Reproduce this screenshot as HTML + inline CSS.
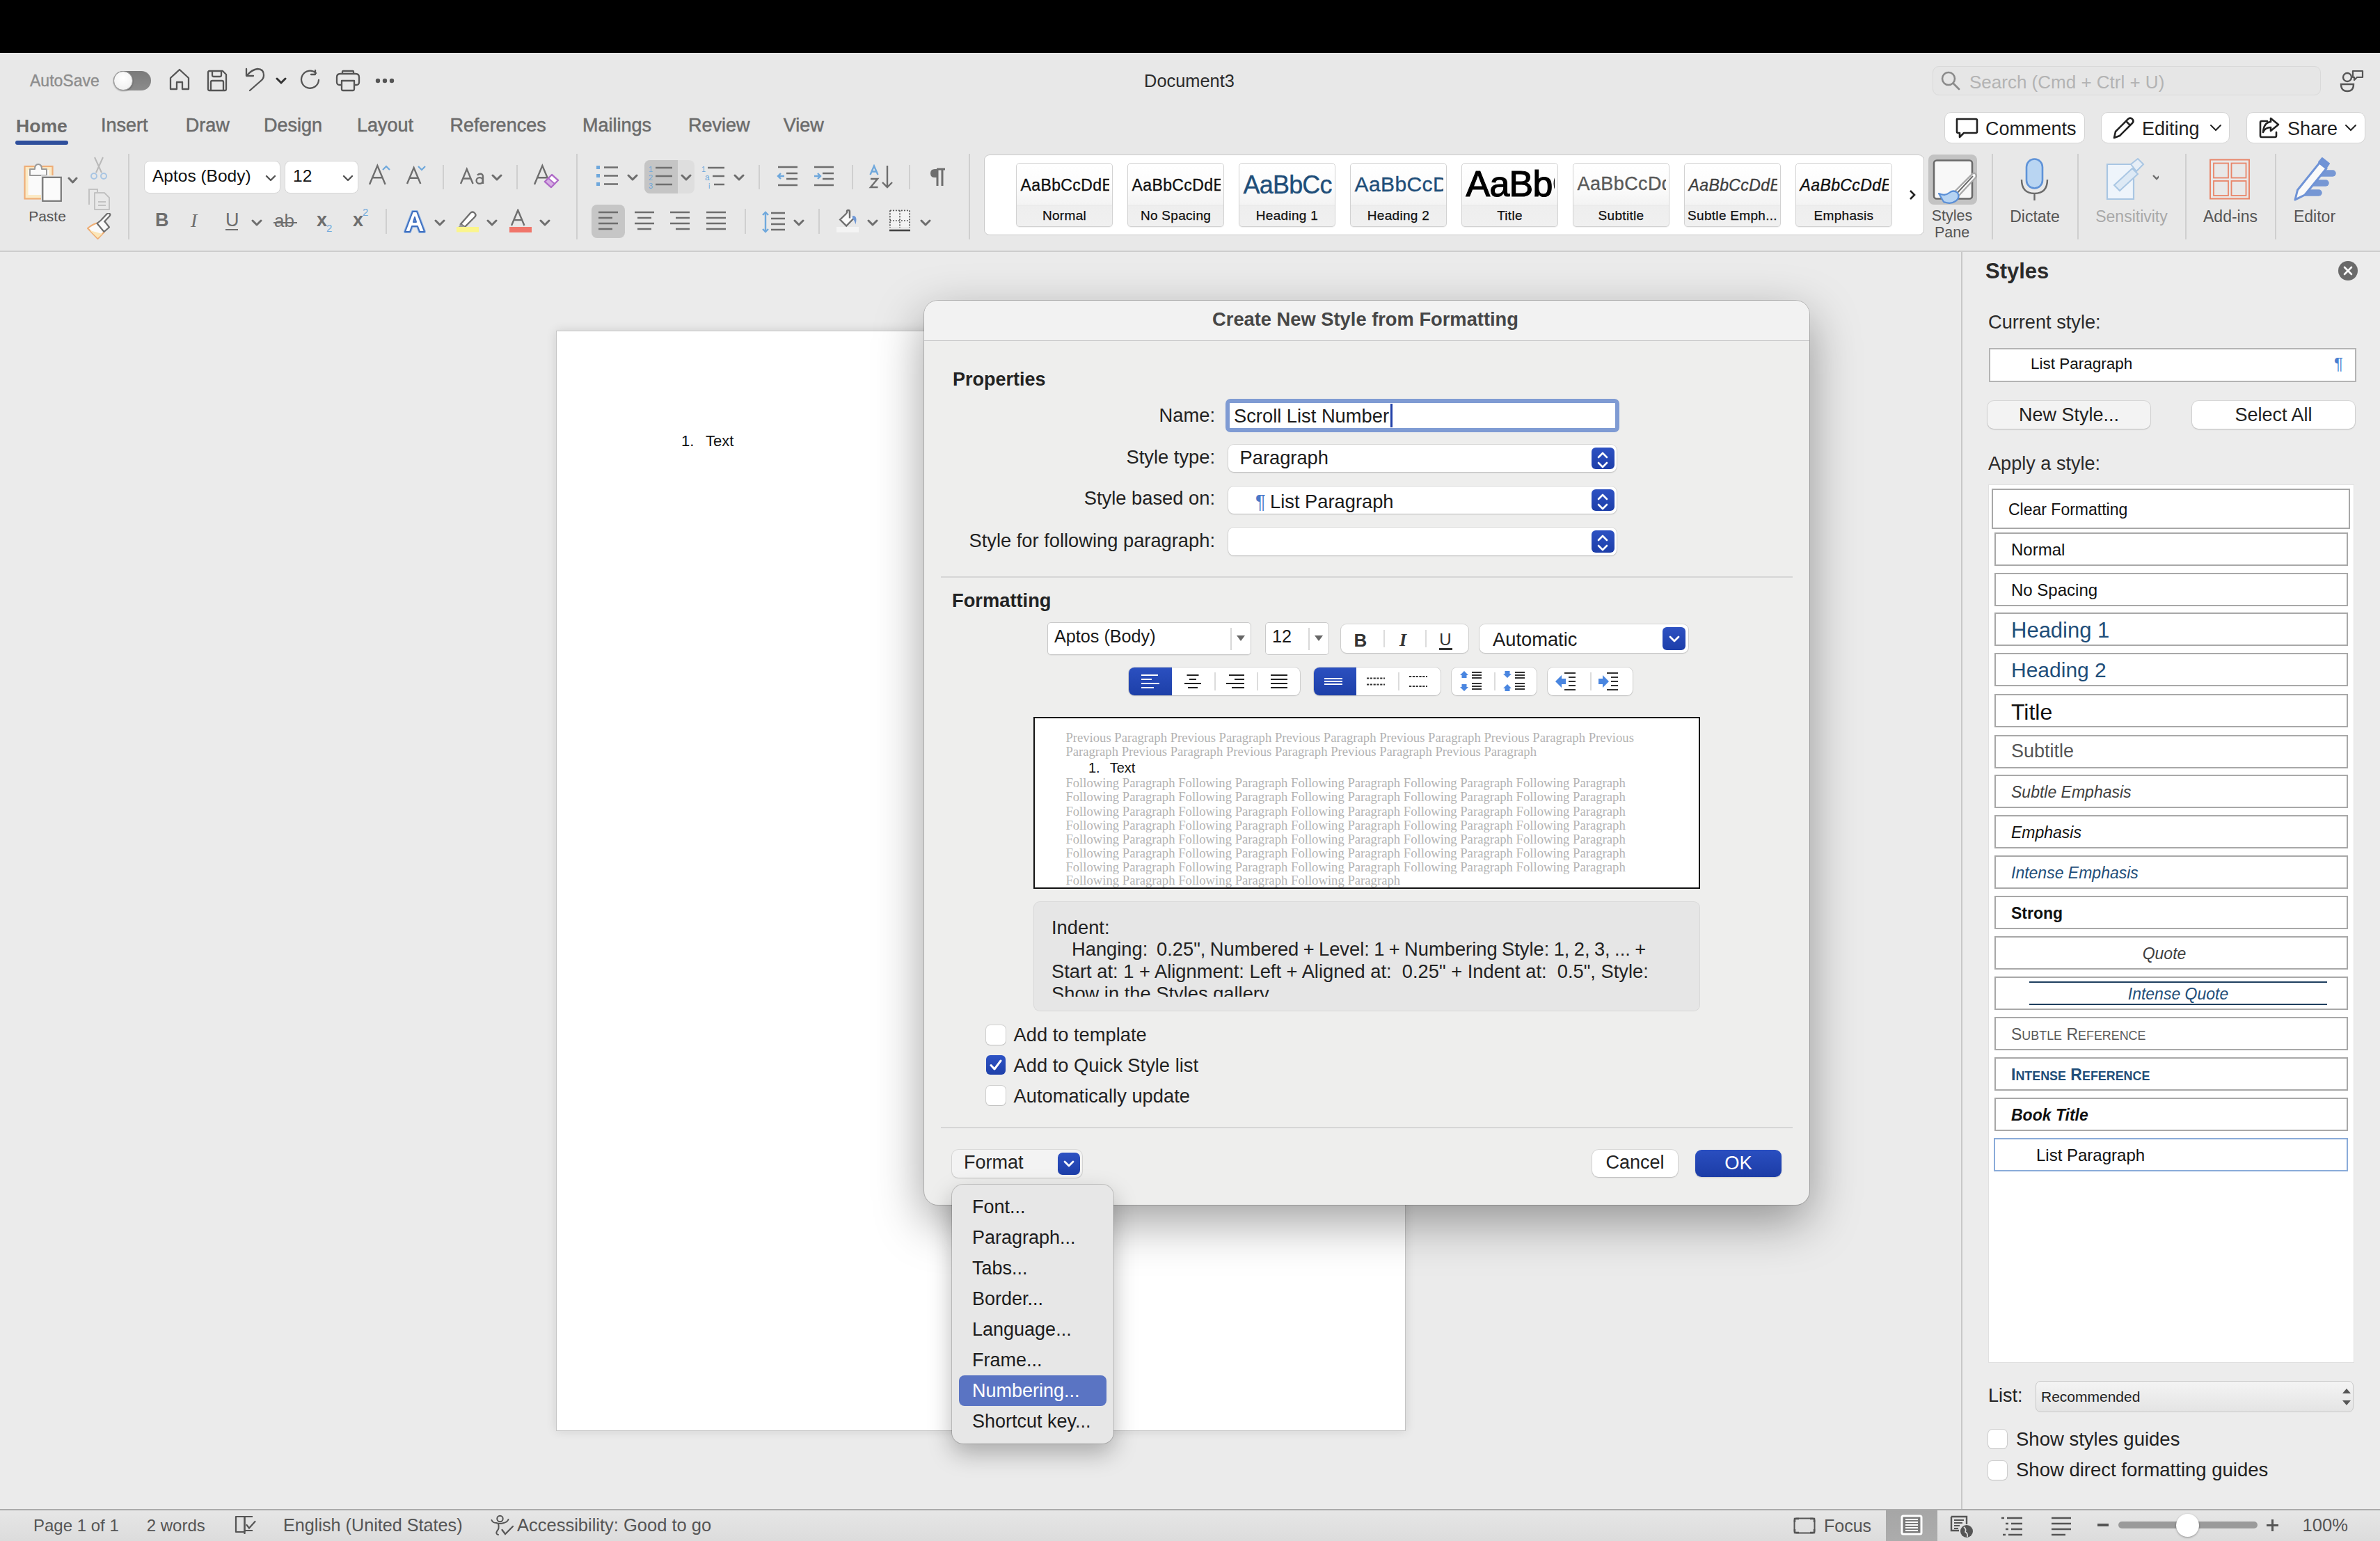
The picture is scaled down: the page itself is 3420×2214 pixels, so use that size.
<!DOCTYPE html><html><head><meta charset="utf-8"><style>
html,body{margin:0;padding:0;}
body{width:3420px;height:2214px;overflow:hidden;position:relative;background:#ebebeb;font-family:"Liberation Sans",sans-serif;}
.a{position:absolute;box-sizing:border-box;}
.t{position:absolute;white-space:pre;line-height:1;}
</style></head><body>
<div class="a" style="left:0px;top:0px;width:3420px;height:76px;background:#000;"></div>
<div class="a" style="left:0px;top:76px;width:3420px;height:284px;background:#e8e8e8;"></div>
<div class="a" style="left:0px;top:360px;width:3420px;height:2px;background:#cdcdcd;"></div>
<div class="a" style="left:0px;top:362px;width:2818px;height:1806px;background:#ebebeb;"></div>
<div class="a" style="left:2818px;top:362px;width:602px;height:1806px;background:#ececec;border-left:2px solid #c8c8c8;"></div>
<div class="a" style="left:0px;top:2168px;width:3420px;height:46px;background:linear-gradient(#e6e6e6,#dcdcdc);border-top:2px solid #ababab;"></div>
<div class="t" style="left:43.0px;top:104.5px;font-size:23px;color:#8d8d8d;font-weight:normal;font-style:normal;font-family:'Liberation Sans', sans-serif;-webkit-text-stroke:0.4px #8d8d8d;">AutoSave</div>
<div class="a" style="left:163px;top:102px;width:54px;height:28px;border-radius:14px;background:linear-gradient(#7a7a7a,#8c8c8c);"></div>
<div class="a" style="left:163px;top:102px;width:28px;height:28px;border-radius:50%;background:radial-gradient(circle at 50% 35%,#fff,#ececec);box-shadow:0 1px 2px rgba(0,0,0,.35);border:1px solid #9a9a9a;"></div>
<svg class="a" style="left:242px;top:98px;" width="32" height="34" viewBox="0 0 32 34"><path d="M3 14 L16 2 L29 14 V30 H20 V20 H12 V30 H3 Z" stroke="#555" stroke-width="2.3" fill="none" stroke-linejoin="round" stroke-linecap="round"/></svg>
<svg class="a" style="left:296px;top:100px;" width="32" height="32" viewBox="0 0 32 32"><path d="M3 4 Q3 2 5 2 H24 L29 7 V28 Q29 30 27 30 H5 Q3 30 3 28 Z M9 2 V8 Q9 10 11 10 H20 Q22 10 22 8 V2 M7 30 V18 Q7 16 9 16 H23 Q25 16 25 18 V30" stroke="#555" stroke-width="2.3" fill="none" stroke-linejoin="round" stroke-linecap="round"/></svg>
<svg class="a" style="left:352px;top:97px;" width="30" height="36" viewBox="0 0 30 36"><path d="M2 2 V12 H12 M3 11 Q10 3 18 2 Q27 2 27 11 Q27 16 23 19 L7 33" stroke="#555" stroke-width="2.3" fill="none" stroke-linejoin="round" stroke-linecap="round"/></svg>
<svg class="a" style="left:396px;top:110px;" width="16" height="12" viewBox="0 0 16 12"><path d="M2 3 L8 9 L14 3" stroke="#333" stroke-width="3" fill="none" stroke-linecap="round"/></svg>
<svg class="a" style="left:431px;top:100px;" width="32" height="32" viewBox="0 0 32 32"><path d="M27 15 A12.5 12.5 0 1 1 23 5 M22 1 V7 H16" stroke="#555" stroke-width="2.3" fill="none" stroke-linejoin="round" stroke-linecap="round"/></svg>
<svg class="a" style="left:482px;top:100px;" width="36" height="32" viewBox="0 0 36 32"><path d="M10 6 V3 Q10 2 11 2 H25 Q26 2 26 3 V6 M8 22 H6 Q2 22 2 18 V11 Q2 6 7 6 H29 Q34 6 34 11 V18 Q34 22 30 22 H28 M9 16 H27 V28 Q27 30 25 30 H11 Q9 30 9 28 Z" stroke="#555" stroke-width="2.3" fill="none" stroke-linejoin="round" stroke-linecap="round"/></svg>
<svg class="a" style="left:539px;top:111px;" width="30" height="10" viewBox="0 0 30 10"><circle cx="4" cy="5" r="3.2" fill="#555"/><circle cx="14" cy="5" r="3.2" fill="#555"/><circle cx="24" cy="5" r="3.2" fill="#555"/></svg>
<div class="t" style="left:1709.0px;transform:translateX(-50%);top:103.5px;font-size:25.4px;color:#2c2c2c;font-weight:normal;font-style:normal;font-family:'Liberation Sans', sans-serif;">Document3</div>
<div class="a" style="left:2777px;top:95px;width:558px;height:42px;background:#e6e6e6;border:1.5px solid #d9d9d9;border-radius:9px;"></div>
<svg class="a" style="left:2788px;top:101px;" width="30" height="30" viewBox="0 0 30 30"><circle cx="12" cy="12" r="9" stroke="#8a8a8a" stroke-width="2.6" fill="none"/><path d="M19 19 L27 27" stroke="#8a8a8a" stroke-width="2.8" stroke-linecap="round"/></svg>
<div class="t" style="left:2830.0px;top:105.0px;font-size:26px;color:#b3b3b3;font-weight:normal;font-style:normal;font-family:'Liberation Sans', sans-serif;">Search (Cmd + Ctrl + U)</div>
<svg class="a" style="left:3362px;top:99px;" width="36" height="34" viewBox="0 0 36 34"><circle cx="11" cy="12" r="6" stroke="#555" stroke-width="2.4" fill="none"/><path d="M2 22 H20 Q20 32 11 32 Q2 32 2 22 Z" stroke="#555" stroke-width="2.4" fill="none"/><path d="M19 3 H33 V12 H25 L21 16 V12 H19 Z" stroke="#555" stroke-width="2.2" fill="#e8e8e8" stroke-linejoin="round"/></svg>
<div class="t" style="left:23.0px;top:167.8px;font-size:26.6px;color:#6b6b6b;font-weight:bold;font-style:normal;font-family:'Liberation Sans', sans-serif;">Home</div>
<div class="t" style="left:145.0px;top:167.4px;font-size:27px;color:#6b6b6b;font-weight:normal;font-style:normal;font-family:'Liberation Sans', sans-serif;-webkit-text-stroke:0.5px #6b6b6b;">Insert</div>
<div class="t" style="left:266.7px;top:167.4px;font-size:27px;color:#6b6b6b;font-weight:normal;font-style:normal;font-family:'Liberation Sans', sans-serif;-webkit-text-stroke:0.5px #6b6b6b;">Draw</div>
<div class="t" style="left:379.0px;top:167.4px;font-size:27px;color:#6b6b6b;font-weight:normal;font-style:normal;font-family:'Liberation Sans', sans-serif;-webkit-text-stroke:0.5px #6b6b6b;">Design</div>
<div class="t" style="left:513.0px;top:167.4px;font-size:27px;color:#6b6b6b;font-weight:normal;font-style:normal;font-family:'Liberation Sans', sans-serif;-webkit-text-stroke:0.5px #6b6b6b;">Layout</div>
<div class="t" style="left:646.6px;top:167.4px;font-size:27px;color:#6b6b6b;font-weight:normal;font-style:normal;font-family:'Liberation Sans', sans-serif;-webkit-text-stroke:0.5px #6b6b6b;">References</div>
<div class="t" style="left:837.0px;top:167.4px;font-size:27px;color:#6b6b6b;font-weight:normal;font-style:normal;font-family:'Liberation Sans', sans-serif;-webkit-text-stroke:0.5px #6b6b6b;">Mailings</div>
<div class="t" style="left:989.0px;top:167.4px;font-size:27px;color:#6b6b6b;font-weight:normal;font-style:normal;font-family:'Liberation Sans', sans-serif;-webkit-text-stroke:0.5px #6b6b6b;">Review</div>
<div class="t" style="left:1125.8px;top:167.4px;font-size:27px;color:#6b6b6b;font-weight:normal;font-style:normal;font-family:'Liberation Sans', sans-serif;-webkit-text-stroke:0.5px #6b6b6b;">View</div>
<div class="a" style="left:22px;top:202px;width:76px;height:6px;background:#2f4f9c;border-radius:3px;"></div>
<div class="a" style="left:2794px;top:161px;width:202px;height:45px;background:#fff;border:1.5px solid #d4d4d4;border-radius:10px;"></div>
<div class="a" style="left:3019px;top:161px;width:185px;height:45px;background:#fff;border:1.5px solid #d4d4d4;border-radius:10px;"></div>
<div class="a" style="left:3228px;top:161px;width:171px;height:45px;background:#fff;border:1.5px solid #d4d4d4;border-radius:10px;"></div>
<svg class="a" style="left:2808px;top:167px;" width="36" height="34" viewBox="0 0 36 34"><path d="M4 4 H31 Q33 4 33 6 V22 Q33 24 31 24 H14 L8 30 V24 H6 Q4 24 4 22 Z" stroke="#222" stroke-width="2.6" fill="none" stroke-linejoin="round" stroke-linecap="round"/></svg>
<div class="t" style="left:2853.0px;top:172.1px;font-size:27px;color:#1f1f1f;font-weight:normal;font-style:normal;font-family:'Liberation Sans', sans-serif;">Comments</div>
<svg class="a" style="left:3034px;top:166px;" width="34" height="36" viewBox="0 0 34 36"><path d="M4 32 L6 23 L24 5 Q27 2 30 5 Q33 8 30 11 L12 29 Z M21 8 L27 14" stroke="#222" stroke-width="2.6" fill="none" stroke-linejoin="round" stroke-linecap="round"/></svg>
<div class="t" style="left:3078.0px;top:172.1px;font-size:27px;color:#1f1f1f;font-weight:normal;font-style:normal;font-family:'Liberation Sans', sans-serif;">Editing</div>
<svg class="a" style="left:3175px;top:178px;" width="18" height="12" viewBox="0 0 18 12"><path d="M2 2 L9 9 L16 2" stroke="#222" stroke-width="2" fill="none" stroke-linecap="round"/></svg>
<svg class="a" style="left:3244px;top:166px;" width="34" height="36" viewBox="0 0 34 36"><path d="M14 8 H6 Q4 8 4 10 V29 Q4 31 6 31 H25 Q27 31 27 29 V24 M19 4 L30 13 L19 22 V17 Q11 17 8 24 Q9 10 19 9 Z" stroke="#222" stroke-width="2.6" fill="none" stroke-linejoin="round" stroke-linecap="round"/></svg>
<div class="t" style="left:3287.0px;top:172.1px;font-size:27px;color:#1f1f1f;font-weight:normal;font-style:normal;font-family:'Liberation Sans', sans-serif;">Share</div>
<svg class="a" style="left:3369px;top:178px;" width="18" height="12" viewBox="0 0 18 12"><path d="M2 2 L9 9 L16 2" stroke="#222" stroke-width="2" fill="none" stroke-linecap="round"/></svg>
<svg class="a" style="left:20px;top:215px;" width="100" height="80" viewBox="0 0 100 80"><rect x="15.5" y="24" width="40" height="46.5" fill="#fbeac6" stroke="#efae78" stroke-width="2.2"/>
<rect x="20.5" y="29" width="30" height="36" fill="#fafafa"/>
<path d="M23 37 V28 H30 Q30 21 35 21 Q40 21 40 28 H47 V37 Z" fill="#fafafa" stroke="#9a9a9a" stroke-width="2" stroke-linejoin="round"/>
<rect x="39" y="37" width="30.5" height="37.5" fill="#e8e8e8"/>
<rect x="41.3" y="39.8" width="26.5" height="34" fill="#fbfbfb" stroke="#777" stroke-width="2.2"/></svg>
<div class="t" style="left:68.0px;transform:translateX(-50%);top:300.2px;font-size:21px;color:#555;font-weight:normal;font-style:normal;font-family:'Liberation Sans', sans-serif;">Paste</div>
<svg class="a" style="left:96.5px;top:253.5px;" width="15" height="12" viewBox="0 0 15 12"><path d="M2 2 L7.5 8 L13 2" stroke="#6e6e6e" stroke-width="3" fill="none" stroke-linecap="round" stroke-linejoin="round"/></svg>
<svg class="a" style="left:128px;top:224px;" width="28" height="36" viewBox="0 0 28 36"><path d="M8 2 L18 24 M20 2 L10 24" stroke="#b9b9b9" stroke-width="2"/><circle cx="7" cy="29" r="4" stroke="#a9c6e3" stroke-width="2" fill="none"/><circle cx="21" cy="29" r="4" stroke="#a9c6e3" stroke-width="2" fill="none"/></svg>
<svg class="a" style="left:124px;top:268px;" width="36" height="36" viewBox="0 0 36 36"><path d="M4 26 V4 H16 L16 8" stroke="#c2c2c2" stroke-width="2" fill="none"/><path d="M12 9 H26 L33 16 V33 H12 Z" stroke="#c2c2c2" stroke-width="2" fill="none" stroke-linejoin="round"/><path d="M17 22 H28 M17 27 H28" stroke="#c2c2c2" stroke-width="2"/></svg>
<svg class="a" style="left:120px;top:306px;" width="44" height="42" viewBox="0 0 44 42"><path d="M6 22 Q13 16 21 14 L30 27 L20.5 37 Z" fill="#fafafa" stroke="#eeae75" stroke-width="2.2" stroke-linejoin="round"/><path d="M9 25 L27 30 L20.5 36 Z" fill="#fbe6b8"/><path d="M19.5 15 L27.5 8.5 L37 20.5 L29.5 27 Z" fill="#fafafa" stroke="#6e6e6e" stroke-width="2.2" stroke-linejoin="round"/><path d="M29.5 13 L37 5 Q39.5 2.5 37.5 0.9 Q35.5 -0.5 33.2 1.8 L25.5 10" fill="#fafafa" stroke="#6e6e6e" stroke-width="2.2" stroke-linejoin="round"/></svg>
<div class="a" style="left:184px;top:221px;width:2px;height:123px;background:#cfcfcf;"></div>
<div class="a" style="left:207px;top:231px;width:196px;height:47px;background:#fff;border:1.5px solid #d6d6d6;border-radius:8px;"></div>
<div class="t" style="left:219.0px;top:241.3px;font-size:24.5px;color:#111;font-weight:normal;font-style:normal;font-family:'Liberation Sans', sans-serif;">Aptos (Body)</div>
<svg class="a" style="left:381.0px;top:250.5px;" width="16" height="12" viewBox="0 0 16 12"><path d="M2 2 L8.0 8 L14 2" stroke="#555" stroke-width="2.4" fill="none" stroke-linecap="round" stroke-linejoin="round"/></svg>
<div class="a" style="left:409px;top:231px;width:106px;height:47px;background:#fff;border:1.5px solid #d6d6d6;border-radius:8px;"></div>
<div class="t" style="left:421.0px;top:241.3px;font-size:24.5px;color:#111;font-weight:normal;font-style:normal;font-family:'Liberation Sans', sans-serif;">12</div>
<svg class="a" style="left:492.0px;top:250.5px;" width="16" height="12" viewBox="0 0 16 12"><path d="M2 2 L8.0 8 L14 2" stroke="#555" stroke-width="2.4" fill="none" stroke-linecap="round" stroke-linejoin="round"/></svg>
<svg class="a" style="left:528px;top:232px;" width="40" height="36" viewBox="0 0 40 36"><path d="M3 33 L14.34 6 L25.68 33 M7.5360000000000005 23.28 H21.144000000000002" stroke="#6e6e6e" stroke-width="2.4" fill="none" stroke-linejoin="miter"/><path d="M22 12 L27 7 L32 12" stroke="#6fa8dc" stroke-width="2.2" fill="none"/></svg>
<svg class="a" style="left:582px;top:232px;" width="36" height="36" viewBox="0 0 36 36"><path d="M3 32 L12.66 9 L22.32 32 M6.864000000000001 23.72 H18.456000000000003" stroke="#6e6e6e" stroke-width="2.4" fill="none" stroke-linejoin="miter"/><path d="M19 7 L24 12 L29 7" stroke="#6fa8dc" stroke-width="2.2" fill="none"/></svg>
<div class="a" style="left:636px;top:237px;width:2px;height:35px;background:#cfcfcf;"></div>
<svg class="a" style="left:660px;top:240px;" width="40" height="28" viewBox="0 0 40 28"><path d="M2 24 L10.82 3 L19.64 24 M5.5280000000000005 16.439999999999998 H16.112000000000002" stroke="#6e6e6e" stroke-width="2.4" fill="none" stroke-linejoin="miter"/><path d="M26 11.5 Q29 9 32 10 Q34 11 34 14 V24" stroke="#6e6e6e" stroke-width="2.4" fill="none"/><ellipse cx="29.2" cy="19.5" rx="4.6" ry="4.4" stroke="#6e6e6e" stroke-width="2.4" fill="none"/></svg>
<svg class="a" style="left:706.0px;top:249.5px;" width="16" height="12" viewBox="0 0 16 12"><path d="M2 2 L8.0 8 L14 2" stroke="#6e6e6e" stroke-width="3" fill="none" stroke-linecap="round" stroke-linejoin="round"/></svg>
<div class="a" style="left:742px;top:237px;width:2px;height:35px;background:#cfcfcf;"></div>
<svg class="a" style="left:766px;top:234px;" width="40" height="40" viewBox="0 0 40 40"><path d="M2 31 L13.34 4 L24.68 31 M6.5360000000000005 21.28 H20.144000000000002" stroke="#6e6e6e" stroke-width="2.4" fill="none" stroke-linejoin="miter"/><path d="M17 27 L27 17 L36 25 L26 35 Z" fill="#fff" stroke="#b06cc8" stroke-width="2.4" stroke-linejoin="round"/><path d="M17 27 L22 22 L31 30 L26 35 Z" fill="#d7b0e4" stroke="#b06cc8" stroke-width="2"/></svg>
<div class="a" style="left:828px;top:221px;width:2px;height:123px;background:#cfcfcf;"></div>
<svg class="a" style="left:856px;top:236px;" width="34" height="34" viewBox="0 0 34 34"><rect x="1" y="2" width="5" height="5" fill="#6fa8dc"/><rect x="1" y="14" width="5" height="5" fill="#6fa8dc"/><rect x="1" y="26" width="5" height="5" fill="#6fa8dc"/><path d="M12 4.5 H32 M12 16.5 H32 M12 28.5 H32" stroke="#6e6e6e" stroke-width="2.4"/></svg>
<svg class="a" style="left:901.0px;top:249.5px;" width="16" height="12" viewBox="0 0 16 12"><path d="M2 2 L8.0 8 L14 2" stroke="#6e6e6e" stroke-width="3" fill="none" stroke-linecap="round" stroke-linejoin="round"/></svg>
<div class="a" style="left:926px;top:230px;width:72px;height:48px;background:#dedede;border-radius:8px;"></div>
<div class="a" style="left:926px;top:230px;width:48px;height:48px;background:#c5c5c5;border-radius:8px 0 0 8px;"></div>
<svg class="a" style="left:932px;top:236px;" width="36" height="36" viewBox="0 0 36 36"><text x="0" y="11" font-size="11" fill="#6fa8dc" font-family="Liberation Sans">1</text><text x="0" y="23" font-size="11" fill="#6fa8dc" font-family="Liberation Sans">2</text><text x="0" y="35" font-size="11" fill="#6fa8dc" font-family="Liberation Sans">3</text><path d="M10 5 H34 M10 17 H34 M10 29 H34" stroke="#6e6e6e" stroke-width="2.4"/></svg>
<svg class="a" style="left:978.0px;top:249.5px;" width="16" height="12" viewBox="0 0 16 12"><path d="M2 2 L8.0 8 L14 2" stroke="#6e6e6e" stroke-width="3" fill="none" stroke-linecap="round" stroke-linejoin="round"/></svg>
<svg class="a" style="left:1007px;top:236px;" width="36" height="36" viewBox="0 0 36 36"><text x="1" y="11" font-size="11" fill="#6fa8dc" font-family="Liberation Sans">1</text><text x="6" y="23" font-size="12" fill="#6fa8dc" font-family="Liberation Sans">a</text><text x="11" y="35" font-size="11" fill="#6fa8dc" font-family="Liberation Sans">i</text><path d="M10 5 H34 M17 17 H34 M19 29 H34" stroke="#6e6e6e" stroke-width="2.4"/></svg>
<svg class="a" style="left:1054.0px;top:249.5px;" width="16" height="12" viewBox="0 0 16 12"><path d="M2 2 L8.0 8 L14 2" stroke="#6e6e6e" stroke-width="3" fill="none" stroke-linecap="round" stroke-linejoin="round"/></svg>
<div class="a" style="left:1090px;top:237px;width:2px;height:35px;background:#cfcfcf;"></div>
<svg class="a" style="left:1116px;top:238px;" width="32" height="30" viewBox="0 0 32 30"><path d="M2 2 H30 M14 11 H30 M14 19 H30 M2 28 H30" stroke="#6e6e6e" stroke-width="2.4"/><path d="M11 15 H2 M6 11 L2 15 L6 19" stroke="#6fa8dc" stroke-width="2.4" fill="none"/></svg>
<svg class="a" style="left:1168px;top:238px;" width="32" height="30" viewBox="0 0 32 30"><path d="M2 2 H30 M14 11 H30 M14 19 H30 M2 28 H30" stroke="#6e6e6e" stroke-width="2.4"/><path d="M2 15 H11 M7 11 L11 15 L7 19" stroke="#6fa8dc" stroke-width="2.4" fill="none"/></svg>
<div class="a" style="left:1224px;top:237px;width:2px;height:35px;background:#cfcfcf;"></div>
<svg class="a" style="left:1248px;top:236px;" width="36" height="36" viewBox="0 0 36 36"><path d="M2.5 15 L8 2.5 L13.5 15 M4.5 10.5 H11.5" stroke="#6fa8dc" stroke-width="2.4" fill="none"/><path d="M3 21 H13 L3 33 H13.5" stroke="#6e6e6e" stroke-width="2.4" fill="none"/><path d="M27 2 V33 M20 26 L27 33 L34 26" stroke="#6e6e6e" stroke-width="2.4" fill="none"/></svg>
<div class="a" style="left:1306px;top:237px;width:2px;height:35px;background:#cfcfcf;"></div>
<svg class="a" style="left:1336px;top:241px;" width="24" height="27" viewBox="0 0 24 27"><path d="M11 2 H7 Q1 2 1 8 Q1 14 7 14 H11 Z" fill="#6e6e6e"/><path d="M10 2 H22 M11 2 V26 M18 2 V26" stroke="#6e6e6e" stroke-width="3" fill="none"/></svg>
<div class="a" style="left:1392px;top:221px;width:2px;height:123px;background:#cfcfcf;"></div>
<div class="t" style="left:223.0px;top:303.1px;font-size:27px;color:#6e6e6e;font-weight:bold;font-style:normal;font-family:'Liberation Sans', sans-serif;">B</div>
<div class="t" style="left:274.0px;top:302.6px;font-size:28px;color:#6e6e6e;font-weight:normal;font-style:italic;font-family:'Liberation Serif', serif;">I</div>
<div class="t" style="left:324.0px;top:303.1px;font-size:27px;color:#6e6e6e;font-weight:normal;font-style:normal;font-family:'Liberation Sans', sans-serif;">U</div>
<div class="a" style="left:324px;top:329px;width:18px;height:2px;background:#6e6e6e;"></div>
<svg class="a" style="left:361.0px;top:314.5px;" width="16" height="12" viewBox="0 0 16 12"><path d="M2 2 L8.0 8 L14 2" stroke="#6e6e6e" stroke-width="3" fill="none" stroke-linecap="round" stroke-linejoin="round"/></svg>
<div class="t" style="left:394.0px;top:304.0px;font-size:26px;color:#6e6e6e;font-weight:normal;font-style:normal;font-family:'Liberation Sans', sans-serif;">ab</div>
<div class="a" style="left:393px;top:319px;width:34px;height:2px;background:#6e6e6e;"></div>
<div class="t" style="left:455.0px;top:303.1px;font-size:27px;color:#6e6e6e;font-weight:bold;font-style:normal;font-family:'Liberation Sans', sans-serif;">x</div>
<div class="t" style="left:469.0px;top:320.3px;font-size:15px;color:#6fa8dc;font-weight:normal;font-style:normal;font-family:'Liberation Sans', sans-serif;">2</div>
<div class="t" style="left:507.0px;top:303.1px;font-size:27px;color:#6e6e6e;font-weight:bold;font-style:normal;font-family:'Liberation Sans', sans-serif;">x</div>
<div class="t" style="left:521.0px;top:297.3px;font-size:15px;color:#6fa8dc;font-weight:normal;font-style:normal;font-family:'Liberation Sans', sans-serif;">2</div>
<div class="a" style="left:554px;top:300px;width:2px;height:36px;background:#cfcfcf;"></div>
<svg class="a" style="left:578px;top:300px;" width="36" height="36" viewBox="0 0 36 36"><path d="M4 33 L15 4 H21 L32 33 H25 L22 25 H14 L11 33 Z M16 19 H20 L18 12 Z" fill="#fff" stroke="#8fb4e3" stroke-width="4" stroke-linejoin="round"/><path d="M4 33 L15 4 H21 L32 33 H25 L22 25 H14 L11 33 Z M16 19 H20 L18 12 Z" fill="#fff" stroke="#3f6fbf" stroke-width="2" stroke-linejoin="round"/></svg>
<svg class="a" style="left:624.0px;top:314.5px;" width="16" height="12" viewBox="0 0 16 12"><path d="M2 2 L8.0 8 L14 2" stroke="#6e6e6e" stroke-width="3" fill="none" stroke-linecap="round" stroke-linejoin="round"/></svg>
<svg class="a" style="left:654px;top:300px;" width="36" height="36" viewBox="0 0 36 36"><path d="M8 22 L22 6 Q25 3 28 6 Q31 9 28 12 L14 26 Z" fill="#fff" stroke="#6e6e6e" stroke-width="2.4"/><path d="M8 22 L3 28 H11 L14 26 Z" fill="#9a9a9a"/><rect x="2" y="26" width="32" height="7.5" fill="#fbf58c"/></svg>
<svg class="a" style="left:699.0px;top:314.5px;" width="16" height="12" viewBox="0 0 16 12"><path d="M2 2 L8.0 8 L14 2" stroke="#6e6e6e" stroke-width="3" fill="none" stroke-linecap="round" stroke-linejoin="round"/></svg>
<svg class="a" style="left:730px;top:300px;" width="36" height="36" viewBox="0 0 36 36"><path d="M5 24 L14.24 2 L23.48 24 M8.696 16.08 H19.784" stroke="#6e6e6e" stroke-width="2.4" fill="none" stroke-linejoin="miter"/></svg>
<div class="a" style="left:732px;top:326px;width:32px;height:8px;background:#f0756a;"></div>
<svg class="a" style="left:775.0px;top:314.5px;" width="16" height="12" viewBox="0 0 16 12"><path d="M2 2 L8.0 8 L14 2" stroke="#6e6e6e" stroke-width="3" fill="none" stroke-linecap="round" stroke-linejoin="round"/></svg>
<div class="a" style="left:1070px;top:300px;width:2px;height:36px;background:#cfcfcf;"></div>
<div class="a" style="left:850px;top:294px;width:48px;height:48px;background:#c6c6c6;border-radius:8px;"></div>
<svg class="a" style="left:858px;top:300px;" width="34" height="34" viewBox="0 0 34 34"><path d="M2 5 H30 M2 13 H22 M2 21 H30 M2 29 H22" stroke="#6e6e6e" stroke-width="2.4"/></svg>
<svg class="a" style="left:910px;top:300px;" width="34" height="34" viewBox="0 0 34 34"><path d="M2 5 H30 M6.0 13 H26.0 M2 21 H30 M6.0 29 H26.0" stroke="#6e6e6e" stroke-width="2.4"/></svg>
<svg class="a" style="left:961px;top:300px;" width="34" height="34" viewBox="0 0 34 34"><path d="M2 5 H30 M10 13 H30 M2 21 H30 M10 29 H30" stroke="#6e6e6e" stroke-width="2.4"/></svg>
<svg class="a" style="left:1013px;top:300px;" width="34" height="34" viewBox="0 0 34 34"><path d="M2 5 H30 M2 13 H30 M2 21 H30 M2 29 H30" stroke="#6e6e6e" stroke-width="2.4"/></svg>
<svg class="a" style="left:1094px;top:302px;" width="36" height="34" viewBox="0 0 36 34"><path d="M6 3 V31 M2 7 L6 3 L10 7 M2 27 L6 31 L10 27" stroke="#6fa8dc" stroke-width="2.4" fill="none"/><path d="M14 4 H34 M14 12 H34 M14 20 H34 M14 28 H34" stroke="#6e6e6e" stroke-width="2.4"/></svg>
<svg class="a" style="left:1140.0px;top:314.5px;" width="16" height="12" viewBox="0 0 16 12"><path d="M2 2 L8.0 8 L14 2" stroke="#6e6e6e" stroke-width="3" fill="none" stroke-linecap="round" stroke-linejoin="round"/></svg>
<div class="a" style="left:1176px;top:300px;width:2px;height:36px;background:#cfcfcf;"></div>
<svg class="a" style="left:1190px;top:290px;" width="50" height="48" viewBox="0 0 50 48"><rect x="12" y="36" width="32" height="7.8" fill="#f4f4f4"/><path d="M27 16 L17.2 25.5 L26.2 34.6 L36.5 24" fill="#fafafa" stroke="#6e6e6e" stroke-width="2.4" stroke-linejoin="miter"/><path d="M31 23.5 V14 Q31 12 29 12 Q27 12 27 14 V16" stroke="#6e6e6e" stroke-width="2.4" fill="none"/><path d="M35 20 Q40 19.5 40.5 25 Q40.5 29 39.3 32.5 Q38.5 27 35 24 Z" fill="#6f98d6"/></svg>
<svg class="a" style="left:1246.0px;top:314.5px;" width="16" height="12" viewBox="0 0 16 12"><path d="M2 2 L8.0 8 L14 2" stroke="#6e6e6e" stroke-width="3" fill="none" stroke-linecap="round" stroke-linejoin="round"/></svg>
<svg class="a" style="left:1276px;top:300px;" width="34" height="36" viewBox="0 0 34 36"><path d="M3 2.5 H31 V27 M3 2.5 V27 M17 2.5 V27 M3 17 H31" stroke="#6e6e6e" stroke-width="1.7" stroke-dasharray="1.7 2.3" fill="none"/><rect x="3" y="3" width="28" height="23" fill="#fafafa" opacity="0.6"/><path d="M3 2.5 H31 V27 M3 2.5 V27 M17 2.5 V27 M3 17 H31" stroke="#555" stroke-width="1.7" stroke-dasharray="1.7 2.3" fill="none"/><path d="M2 31 H32" stroke="#444" stroke-width="2.6"/></svg>
<svg class="a" style="left:1322.0px;top:314.5px;" width="16" height="12" viewBox="0 0 16 12"><path d="M2 2 L8.0 8 L14 2" stroke="#6e6e6e" stroke-width="3" fill="none" stroke-linecap="round" stroke-linejoin="round"/></svg>
<div class="a" style="left:1414px;top:222px;width:1351px;height:116px;background:#fff;border:1.5px solid #c9c9c9;border-radius:8px;"></div>
<div class="a" style="left:1460px;top:234px;width:139px;height:92px;border:1.5px solid #d2d2d2;border-radius:5px;overflow:hidden;background:linear-gradient(#fff 0,#fcfcfc 35%,#f3f3f3 66%,#e6e6e6 66.5%,#eeeeee 68%,#f0f0f0 100%);box-shadow:0 1px 1px rgba(0,0,0,.06);"></div>
<div class="a" style="left:1465px;top:236px;width:129px;height:58px;overflow:hidden;"><div class="t" style="left:1.5px;top:18.5px;font-size:23px;color:#111;font-style:normal;font-family:'Liberation Sans', sans-serif;letter-spacing:0.4px;-webkit-text-stroke:0.35px #111">AaBbCcDdEe</div></div>
<div class="t" style="left:1529.5px;transform:translateX(-50%);top:299.9px;font-size:19px;color:#111;font-weight:normal;font-style:normal;font-family:'Liberation Sans', sans-serif;-webkit-text-stroke:0.25px #111;letter-spacing:0.3px;">Normal</div>
<div class="a" style="left:1620px;top:234px;width:139px;height:92px;border:1.5px solid #d2d2d2;border-radius:5px;overflow:hidden;background:linear-gradient(#fff 0,#fcfcfc 35%,#f3f3f3 66%,#e6e6e6 66.5%,#eeeeee 68%,#f0f0f0 100%);box-shadow:0 1px 1px rgba(0,0,0,.06);"></div>
<div class="a" style="left:1625px;top:236px;width:129px;height:58px;overflow:hidden;"><div class="t" style="left:1.5px;top:18.5px;font-size:23px;color:#111;font-style:normal;font-family:'Liberation Sans', sans-serif;letter-spacing:0.4px;-webkit-text-stroke:0.35px #111">AaBbCcDdEe</div></div>
<div class="t" style="left:1689.5px;transform:translateX(-50%);top:299.9px;font-size:19px;color:#111;font-weight:normal;font-style:normal;font-family:'Liberation Sans', sans-serif;-webkit-text-stroke:0.25px #111;letter-spacing:0.3px;">No Spacing</div>
<div class="a" style="left:1780px;top:234px;width:139px;height:92px;border:1.5px solid #d2d2d2;border-radius:5px;overflow:hidden;background:linear-gradient(#fff 0,#fcfcfc 35%,#f3f3f3 66%,#e6e6e6 66.5%,#eeeeee 68%,#f0f0f0 100%);box-shadow:0 1px 1px rgba(0,0,0,.06);"></div>
<div class="a" style="left:1785px;top:236px;width:129px;height:58px;overflow:hidden;"><div class="t" style="left:1.5px;top:11.5px;font-size:36px;color:#1f4e79;font-style:normal;font-family:'Liberation Sans', sans-serif;letter-spacing:-0.8px;-webkit-text-stroke:0.35px #1f4e79">AaBbCcDd</div></div>
<div class="t" style="left:1849.5px;transform:translateX(-50%);top:299.9px;font-size:19px;color:#111;font-weight:normal;font-style:normal;font-family:'Liberation Sans', sans-serif;-webkit-text-stroke:0.25px #111;letter-spacing:0.3px;">Heading 1</div>
<div class="a" style="left:1940px;top:234px;width:139px;height:92px;border:1.5px solid #d2d2d2;border-radius:5px;overflow:hidden;background:linear-gradient(#fff 0,#fcfcfc 35%,#f3f3f3 66%,#e6e6e6 66.5%,#eeeeee 68%,#f0f0f0 100%);box-shadow:0 1px 1px rgba(0,0,0,.06);"></div>
<div class="a" style="left:1945px;top:236px;width:129px;height:58px;overflow:hidden;"><div class="t" style="left:1.5px;top:14.0px;font-size:30px;color:#1f4e79;font-style:normal;font-family:'Liberation Sans', sans-serif;letter-spacing:0.4px;-webkit-text-stroke:0.35px #1f4e79">AaBbCcDdEe</div></div>
<div class="t" style="left:2009.5px;transform:translateX(-50%);top:299.9px;font-size:19px;color:#111;font-weight:normal;font-style:normal;font-family:'Liberation Sans', sans-serif;-webkit-text-stroke:0.25px #111;letter-spacing:0.3px;">Heading 2</div>
<div class="a" style="left:2100px;top:234px;width:139px;height:92px;border:1.5px solid #d2d2d2;border-radius:5px;overflow:hidden;background:linear-gradient(#fff 0,#fcfcfc 35%,#f3f3f3 66%,#e6e6e6 66.5%,#eeeeee 68%,#f0f0f0 100%);box-shadow:0 1px 1px rgba(0,0,0,.06);"></div>
<div class="a" style="left:2105px;top:236px;width:129px;height:58px;overflow:hidden;"><div class="t" style="left:1.5px;top:1.5px;font-size:52px;color:#000;font-style:normal;font-family:'Liberation Sans', sans-serif;letter-spacing:-0.8px;-webkit-text-stroke:1.2px #000">AaBbCc</div></div>
<div class="t" style="left:2169.5px;transform:translateX(-50%);top:299.9px;font-size:19px;color:#111;font-weight:normal;font-style:normal;font-family:'Liberation Sans', sans-serif;-webkit-text-stroke:0.25px #111;letter-spacing:0.3px;">Title</div>
<div class="a" style="left:2260px;top:234px;width:139px;height:92px;border:1.5px solid #d2d2d2;border-radius:5px;overflow:hidden;background:linear-gradient(#fff 0,#fcfcfc 35%,#f3f3f3 66%,#e6e6e6 66.5%,#eeeeee 68%,#f0f0f0 100%);box-shadow:0 1px 1px rgba(0,0,0,.06);"></div>
<div class="a" style="left:2265px;top:236px;width:129px;height:58px;overflow:hidden;"><div class="t" style="left:1.5px;top:15.1px;font-size:27px;color:#595959;font-style:normal;font-family:'Liberation Sans', sans-serif;letter-spacing:0.4px;-webkit-text-stroke:0.35px #595959">AaBbCcDdEe</div></div>
<div class="t" style="left:2329.5px;transform:translateX(-50%);top:299.9px;font-size:19px;color:#111;font-weight:normal;font-style:normal;font-family:'Liberation Sans', sans-serif;-webkit-text-stroke:0.25px #111;letter-spacing:0.3px;">Subtitle</div>
<div class="a" style="left:2420px;top:234px;width:139px;height:92px;border:1.5px solid #d2d2d2;border-radius:5px;overflow:hidden;background:linear-gradient(#fff 0,#fcfcfc 35%,#f3f3f3 66%,#e6e6e6 66.5%,#eeeeee 68%,#f0f0f0 100%);box-shadow:0 1px 1px rgba(0,0,0,.06);"></div>
<div class="a" style="left:2425px;top:236px;width:129px;height:58px;overflow:hidden;"><div class="t" style="left:1.5px;top:18.5px;font-size:23px;color:#404040;font-style:italic;font-family:'Liberation Sans', sans-serif;letter-spacing:0.4px;-webkit-text-stroke:0.35px #404040">AaBbCcDdEe</div></div>
<div class="t" style="left:2489.5px;transform:translateX(-50%);top:299.9px;font-size:19px;color:#111;font-weight:normal;font-style:normal;font-family:'Liberation Sans', sans-serif;-webkit-text-stroke:0.25px #111;letter-spacing:0.3px;">Subtle Emph...</div>
<div class="a" style="left:2580px;top:234px;width:139px;height:92px;border:1.5px solid #d2d2d2;border-radius:5px;overflow:hidden;background:linear-gradient(#fff 0,#fcfcfc 35%,#f3f3f3 66%,#e6e6e6 66.5%,#eeeeee 68%,#f0f0f0 100%);box-shadow:0 1px 1px rgba(0,0,0,.06);"></div>
<div class="a" style="left:2585px;top:236px;width:129px;height:58px;overflow:hidden;"><div class="t" style="left:1.5px;top:18.5px;font-size:23px;color:#111;font-style:italic;font-family:'Liberation Sans', sans-serif;letter-spacing:0.4px;-webkit-text-stroke:0.35px #111">AaBbCcDdEe</div></div>
<div class="t" style="left:2649.5px;transform:translateX(-50%);top:299.9px;font-size:19px;color:#111;font-weight:normal;font-style:normal;font-family:'Liberation Sans', sans-serif;-webkit-text-stroke:0.25px #111;letter-spacing:0.3px;">Emphasis</div>
<svg class="a" style="left:2741px;top:272px;" width="14" height="16" viewBox="0 0 14 16"><path d="M4 2 L10 8 L4 14" stroke="#222" stroke-width="2.6" fill="none"/></svg>
<div class="a" style="left:2771px;top:222px;width:70px;height:72px;background:#c3c3c3;border-radius:8px;"></div>
<svg class="a" style="left:2771px;top:222px;" width="70" height="72" viewBox="0 0 70 72"><rect x="8" y="8.5" width="55" height="55" rx="4" fill="#f8f8f8" stroke="#6a6a6a" stroke-width="2.6"/><path d="M67 27 Q70 30 68 33 L41 62 L34 57 L63 28 Q65 26 67 27 Z" fill="#fff" stroke="#a8a8a8" stroke-width="2.4" stroke-linejoin="round"/><path d="M64 31 L38 59" stroke="#6a6a6a" stroke-width="2"/><path d="M15 56 Q24 60 30 55 Q36 50 42 55 Q46 62 39 67 Q32 72 22 68 Z" fill="#b6d3f2" stroke="#5b8fd6" stroke-width="2.2" stroke-linejoin="round"/></svg>
<div class="t" style="left:2805.0px;transform:translateX(-50%);top:299.8px;font-size:21.5px;color:#555;font-weight:normal;font-style:normal;font-family:'Liberation Sans', sans-serif;">Styles</div>
<div class="t" style="left:2805.0px;transform:translateX(-50%);top:324.3px;font-size:21.5px;color:#555;font-weight:normal;font-style:normal;font-family:'Liberation Sans', sans-serif;">Pane</div>
<div class="a" style="left:2862px;top:221px;width:2px;height:123px;background:#cfcfcf;"></div>
<svg class="a" style="left:2900px;top:224px;" width="48" height="68" viewBox="0 0 48 68"><rect x="12" y="4.5" width="23" height="42" rx="11.5" fill="#b9d5f2" stroke="#5f93d8" stroke-width="2.6"/><path d="M5 34 Q5 54 23.5 54 Q42 54 42 34 M23.5 54 V64" stroke="#6a6a6a" stroke-width="2.4" fill="none"/></svg>
<div class="t" style="left:2924.0px;transform:translateX(-50%);top:299.5px;font-size:23px;color:#555;font-weight:normal;font-style:normal;font-family:'Liberation Sans', sans-serif;">Dictate</div>
<div class="a" style="left:2985px;top:221px;width:2px;height:123px;background:#cfcfcf;"></div>
<svg class="a" style="left:3026px;top:226px;" width="76" height="64" viewBox="0 0 76 64"><path d="M2 10 H40 V60 H2 Z" fill="#eef4fb" stroke="#a9c6e3" stroke-width="2.2"/><path d="M12 40 L38 16 L46 24 L20 48 Z" fill="#dde9f5" stroke="#a9c6e3" stroke-width="2"/><path d="M36 10 L46 2 L54 10 L44 20 Z" fill="#e7eef6" stroke="#a9c6e3" stroke-width="2"/><path d="M68 26 L73 31 L78 26" stroke="#6e6e6e" stroke-width="2.4" fill="none"/></svg>
<div class="t" style="left:3063.0px;transform:translateX(-50%);top:299.5px;font-size:23px;color:#a9a9a9;font-weight:normal;font-style:normal;font-family:'Liberation Sans', sans-serif;">Sensitivity</div>
<div class="a" style="left:3140px;top:221px;width:2px;height:123px;background:#cfcfcf;"></div>
<svg class="a" style="left:3170px;top:224px;" width="68" height="68" viewBox="0 0 68 68"><rect x="6" y="5.5" width="56" height="56" fill="none" stroke="#e8866a" stroke-width="2"/><rect x="11" y="10.5" width="21" height="21" fill="none" stroke="#e8866a" stroke-width="1.8"/><rect x="36.5" y="10.5" width="21" height="21" fill="none" stroke="#e8866a" stroke-width="1.8"/><rect x="11" y="36" width="21" height="21" fill="none" stroke="#e8866a" stroke-width="1.8"/><rect x="36.5" y="36" width="21" height="21" fill="none" stroke="#e8866a" stroke-width="1.8"/></svg>
<div class="t" style="left:3205.0px;transform:translateX(-50%);top:299.5px;font-size:23px;color:#555;font-weight:normal;font-style:normal;font-family:'Liberation Sans', sans-serif;">Add-ins</div>
<div class="a" style="left:3269px;top:221px;width:2px;height:123px;background:#cfcfcf;"></div>
<svg class="a" style="left:3290px;top:222px;" width="72" height="72" viewBox="0 0 72 72"><path d="M40 27 H62" stroke="#7697d4" stroke-width="9.5" stroke-linecap="round"/><path d="M30 41 H52" stroke="#7697d4" stroke-width="9.5" stroke-linecap="round"/><path d="M20 55 H42" stroke="#7697d4" stroke-width="9.5" stroke-linecap="round"/><path d="M8 65 L11.5 51 L43 12 L53 20 L22 58 Z" fill="#fafafa" stroke="#6f93d6" stroke-width="3" stroke-linejoin="round"/><path d="M42 11 L47 5 L57 13 L53 19 Z" fill="#6f93d6" stroke="#6f93d6" stroke-width="2" stroke-linejoin="round"/></svg>
<div class="t" style="left:3326.0px;transform:translateX(-50%);top:299.5px;font-size:23px;color:#555;font-weight:normal;font-style:normal;font-family:'Liberation Sans', sans-serif;">Editor</div>
<div class="a" style="left:799px;top:475px;width:1221px;height:1581px;background:#fff;border:1.5px solid #c4c4c4;box-shadow:0 0 14px rgba(0,0,0,.12);"></div>
<div class="t" style="left:979.0px;top:623.4px;font-size:22px;color:#111;font-weight:normal;font-style:normal;font-family:'Liberation Sans', sans-serif;">1.</div>
<div class="t" style="left:1014.0px;top:623.4px;font-size:22px;color:#111;font-weight:normal;font-style:normal;font-family:'Liberation Sans', sans-serif;">Text</div>
<div class="a" style="left:1328px;top:432px;width:1272px;height:1299px;background:#eeeeed;border-radius:20px;box-shadow:0 0 0 1px rgba(0,0,0,.18),0 24px 70px rgba(0,0,0,.38);overflow:hidden;"></div>
<div class="a" style="left:1328px;top:432px;width:1272px;height:57.5px;background:#f2f2f2;border-radius:20px 20px 0 0;border-bottom:1.5px solid #c4c4c4;"></div>
<div class="t" style="left:1962.0px;transform:translateX(-50%);top:444.9px;font-size:27.3px;color:#464646;font-weight:bold;font-style:normal;font-family:'Liberation Sans', sans-serif;">Create New Style from Formatting</div>
<div class="t" style="left:1369.0px;top:531.5px;font-size:27px;color:#222;font-weight:bold;font-style:normal;font-family:'Liberation Sans', sans-serif;">Properties</div>
<div class="t" style="right:1674.0px;top:582.9px;font-size:27.3px;color:#222;font-weight:normal;font-style:normal;font-family:'Liberation Sans', sans-serif;">Name:</div>
<div class="t" style="right:1674.0px;top:643.4px;font-size:27.3px;color:#222;font-weight:normal;font-style:normal;font-family:'Liberation Sans', sans-serif;">Style type:</div>
<div class="t" style="right:1674.0px;top:702.2px;font-size:27.3px;color:#222;font-weight:normal;font-style:normal;font-family:'Liberation Sans', sans-serif;">Style based on:</div>
<div class="t" style="right:1674.0px;top:762.5px;font-size:27.3px;color:#222;font-weight:normal;font-style:normal;font-family:'Liberation Sans', sans-serif;">Style for following paragraph:</div>
<div class="a" style="left:1761px;top:573px;width:566px;height:48px;background:#7f9bd3;border-radius:7px;"></div>
<div class="a" style="left:1767px;top:579px;width:554px;height:36px;background:#fff;"></div>
<div class="t" style="left:1773.0px;top:583.7px;font-size:27.3px;color:#1a1a1a;font-weight:normal;font-style:normal;font-family:'Liberation Sans', sans-serif;">Scroll List Number</div>
<div class="a" style="left:1998px;top:580px;width:3px;height:34px;background:#2140a8;"></div>
<div class="a" style="left:1765px;top:638.5px;width:558px;height:39.5px;background:#fff;border-radius:8px;box-shadow:0 0 0 1px rgba(0,0,0,.08),0 1px 2px rgba(0,0,0,.15);"></div>
<div class="a" style="left:2287px;top:643.0px;width:33px;height:31.0px;background:linear-gradient(#2d51c2,#1d3ea9);border-radius:6px;"></div>
<svg class="a" style="left:2293px;top:646.5px;" width="20" height="28" viewBox="0 0 20 28"><path d="M4 10 L10 4 L16 10 M4 18 L10 24 L16 18" stroke="#fff" stroke-width="2.6" fill="none" stroke-linecap="round" stroke-linejoin="round"/></svg>
<div class="t" style="left:1781.5px;top:643.9px;font-size:27.3px;color:#1a1a1a;font-weight:normal;font-style:normal;font-family:'Liberation Sans', sans-serif;">Paragraph</div>
<div class="a" style="left:1765px;top:698.6px;width:558px;height:39.39999999999998px;background:#fff;border-radius:8px;box-shadow:0 0 0 1px rgba(0,0,0,.08),0 1px 2px rgba(0,0,0,.15);"></div>
<div class="a" style="left:2287px;top:703.1px;width:33px;height:30.899999999999977px;background:linear-gradient(#2d51c2,#1d3ea9);border-radius:6px;"></div>
<svg class="a" style="left:2293px;top:706.6px;" width="20" height="28" viewBox="0 0 20 28"><path d="M4 10 L10 4 L16 10 M4 18 L10 24 L16 18" stroke="#fff" stroke-width="2.6" fill="none" stroke-linecap="round" stroke-linejoin="round"/></svg>
<div class="t" style="left:1804.0px;top:706.9px;font-size:27.3px;color:#4a78c8;font-weight:normal;font-style:normal;font-family:'Liberation Sans', sans-serif;">¶</div>
<div class="t" style="left:1825.0px;top:706.9px;font-size:27.3px;color:#1a1a1a;font-weight:normal;font-style:normal;font-family:'Liberation Sans', sans-serif;">List Paragraph</div>
<div class="a" style="left:1765px;top:757.5px;width:558px;height:40.5px;background:#fff;border-radius:8px;box-shadow:0 0 0 1px rgba(0,0,0,.08),0 1px 2px rgba(0,0,0,.15);"></div>
<div class="a" style="left:2287px;top:762.0px;width:33px;height:32.0px;background:linear-gradient(#2d51c2,#1d3ea9);border-radius:6px;"></div>
<svg class="a" style="left:2293px;top:765.5px;" width="20" height="28" viewBox="0 0 20 28"><path d="M4 10 L10 4 L16 10 M4 18 L10 24 L16 18" stroke="#fff" stroke-width="2.6" fill="none" stroke-linecap="round" stroke-linejoin="round"/></svg>
<div class="a" style="left:1352px;top:828px;width:1224px;height:2px;background:#d6d6d6;"></div>
<div class="t" style="left:1368.0px;top:848.9px;font-size:27.3px;color:#222;font-weight:bold;font-style:normal;font-family:'Liberation Sans', sans-serif;">Formatting</div>
<div class="a" style="left:1505px;top:894px;width:293px;height:47px;background:#fff;border:1.5px solid #c9c9c9;border-radius:5px;box-shadow:0 1px 1px rgba(0,0,0,.06);"></div>
<div class="a" style="left:1768px;top:902px;width:2px;height:32px;background:#d8d8d8;"></div>
<svg class="a" style="left:1776px;top:912px;" width="14" height="10" viewBox="0 0 14 10"><path d="M1 1 H13 L7 9 Z" fill="#666"/></svg>
<div class="t" style="left:1515.0px;top:901.7px;font-size:25.2px;color:#1a1a1a;font-weight:normal;font-style:normal;font-family:'Liberation Sans', sans-serif;">Aptos (Body)</div>
<div class="a" style="left:1818px;top:894px;width:92px;height:47px;background:#fff;border:1.5px solid #c9c9c9;border-radius:5px;"></div>
<div class="a" style="left:1880px;top:902px;width:2px;height:32px;background:#d8d8d8;"></div>
<svg class="a" style="left:1888px;top:912px;" width="14" height="10" viewBox="0 0 14 10"><path d="M1 1 H13 L7 9 Z" fill="#666"/></svg>
<div class="t" style="left:1828.0px;top:901.7px;font-size:25.2px;color:#1a1a1a;font-weight:normal;font-style:normal;font-family:'Liberation Sans', sans-serif;">12</div>
<div class="a" style="left:1927px;top:897px;width:183px;height:41px;background:#fff;border-radius:8px;box-shadow:0 0 0 1px rgba(0,0,0,.1),0 1px 2px rgba(0,0,0,.12);"></div>
<div class="a" style="left:1988px;top:905px;width:2px;height:25px;background:#dcdcdc;"></div>
<div class="a" style="left:2048px;top:905px;width:2px;height:25px;background:#dcdcdc;"></div>
<div class="t" style="left:1955.0px;transform:translateX(-50%);top:907.0px;font-size:26px;color:#333;font-weight:bold;font-style:normal;font-family:'Liberation Sans', sans-serif;">B</div>
<div class="t" style="left:2016.0px;transform:translateX(-50%);top:907.0px;font-size:26px;color:#333;font-weight:bold;font-style:italic;font-family:'Liberation Sans', sans-serif;font-family:'Liberation Serif',serif;">I</div>
<div class="t" style="left:2077.0px;transform:translateX(-50%);top:906.7px;font-size:24px;color:#333;font-weight:normal;font-style:normal;font-family:'Liberation Sans', sans-serif;">U</div>
<div class="a" style="left:2068px;top:931px;width:19px;height:2.5px;background:#333;"></div>
<div class="a" style="left:2126px;top:897px;width:300px;height:41px;background:#fff;border-radius:8px;box-shadow:0 0 0 1px rgba(0,0,0,.1),0 1px 2px rgba(0,0,0,.12);"></div>
<div class="a" style="left:2389px;top:901px;width:33px;height:33px;background:linear-gradient(#2d51c2,#1d3ea9);border-radius:6px;"></div>
<svg class="a" style="left:2396px;top:910px;" width="20" height="16" viewBox="0 0 20 16"><path d="M4 5 L10 11 L16 5" stroke="#fff" stroke-width="2.8" fill="none" stroke-linecap="round" stroke-linejoin="round"/></svg>
<div class="t" style="left:2145.0px;top:904.9px;font-size:27.3px;color:#1a1a1a;font-weight:normal;font-style:normal;font-family:'Liberation Sans', sans-serif;">Automatic</div>
<div class="a" style="left:1622px;top:959px;width:246px;height:40px;background:#fff;border-radius:8px;box-shadow:0 0 0 1px rgba(0,0,0,.1),0 1px 2px rgba(0,0,0,.12);overflow:hidden;"></div>
<div class="a" style="left:1745px;top:966px;width:2px;height:26px;background:#dcdcdc;"></div>
<div class="a" style="left:1806px;top:966px;width:2px;height:26px;background:#dcdcdc;"></div>
<div class="a" style="left:1622px;top:959px;width:62px;height:40px;background:linear-gradient(#2b50c0,#1d3fa8);border-radius:8px 0 0 8px;"></div>
<div class="a" style="left:1888px;top:959px;width:182px;height:40px;background:#fff;border-radius:8px;box-shadow:0 0 0 1px rgba(0,0,0,.1),0 1px 2px rgba(0,0,0,.12);overflow:hidden;"></div>
<div class="a" style="left:2009px;top:966px;width:2px;height:26px;background:#dcdcdc;"></div>
<div class="a" style="left:1888px;top:959px;width:61px;height:40px;background:linear-gradient(#2b50c0,#1d3fa8);border-radius:8px 0 0 8px;"></div>
<div class="a" style="left:2086px;top:959px;width:122px;height:40px;background:#fff;border-radius:8px;box-shadow:0 0 0 1px rgba(0,0,0,.1),0 1px 2px rgba(0,0,0,.12);overflow:hidden;"></div>
<div class="a" style="left:2147px;top:966px;width:2px;height:26px;background:#dcdcdc;"></div>
<div class="a" style="left:2224px;top:959px;width:122px;height:40px;background:#fff;border-radius:8px;box-shadow:0 0 0 1px rgba(0,0,0,.1),0 1px 2px rgba(0,0,0,.12);overflow:hidden;"></div>
<div class="a" style="left:2285px;top:966px;width:2px;height:26px;background:#dcdcdc;"></div>
<svg class="a" style="left:1635px;top:967px;" width="36" height="24" viewBox="0 0 36 24"><path d="M5 3 H29 M5 9 H20 M5 15 H31 M5 21 H23" stroke="#fff" stroke-width="2"/></svg>
<svg class="a" style="left:1696px;top:967px;" width="36" height="24" viewBox="0 0 36 24"><path d="M9.5 3 H26.5 M13.0 9 H23.0 M6.0 15 H30.0 M11.0 21 H25.0" stroke="#222" stroke-width="2"/></svg>
<svg class="a" style="left:1757px;top:967px;" width="36" height="24" viewBox="0 0 36 24"><path d="M9 3 H31 M17 9 H31 M5 15 H31 M13 21 H31" stroke="#222" stroke-width="2"/></svg>
<svg class="a" style="left:1820px;top:967px;" width="36" height="24" viewBox="0 0 36 24"><path d="M6 3 H30 M6 9 H30 M6 15 H30 M6 21 H30" stroke="#222" stroke-width="2"/></svg>
<svg class="a" style="left:1900px;top:965px;" width="32" height="28" viewBox="0 0 32 28"><path d="M3 10 H29 M3 14 H29 M3 18 H29" stroke="#fff" stroke-width="1.8"/></svg>
<svg class="a" style="left:1961px;top:965px;" width="32" height="28" viewBox="0 0 32 28"><path d="M3 9.5 H29 M3 18.5 H29" stroke="#333" stroke-width="2" stroke-dasharray="3.2 1.6"/></svg>
<svg class="a" style="left:2022px;top:965px;" width="32" height="28" viewBox="0 0 32 28"><path d="M3 7 H29 M3 21 H29" stroke="#333" stroke-width="2" stroke-dasharray="3.2 1.6"/></svg>
<svg class="a" style="left:2094px;top:963px;" width="40" height="32" viewBox="0 0 40 32"><path d="M10 1 L16 7 H13.5 V11 H6.5 V7 H4 Z M10 30 L16 24 H13.5 V20 H6.5 V24 H4 Z" fill="#4a86e0"/><path d="M21 3 H35 M21 7 H35 M21 11 H35 M21 19 H35 M21 23 H35 M21 27 H35" stroke="#333" stroke-width="2"/></svg>
<svg class="a" style="left:2156px;top:963px;" width="40" height="32" viewBox="0 0 40 32"><path d="M10 11 L16 5 H13.5 V1 H6.5 V5 H4 Z M10 20 L16 26 H13.5 V30 H6.5 V26 H4 Z" fill="#4a86e0"/><path d="M21 3 H35 M21 7 H35 M21 11 H35 M21 19 H35 M21 23 H35 M21 27 H35" stroke="#333" stroke-width="2"/></svg>
<svg class="a" style="left:2234px;top:963px;" width="40" height="32" viewBox="0 0 40 32"><path d="M1 16 L10 7 V12 H16 V20 H10 V25 Z" fill="#4a86e0"/><path d="M14 4 H30 M20 10 H30 M20 16 H30 M20 22 H30 M14 28 H30" stroke="#333" stroke-width="2"/></svg>
<svg class="a" style="left:2295px;top:963px;" width="40" height="32" viewBox="0 0 40 32"><path d="M17 16 L8 7 V12 H2 V20 H8 V25 Z" fill="#4a86e0"/><path d="M14 4 H30 M20 10 H30 M20 16 H30 M20 22 H30 M14 28 H30" stroke="#333" stroke-width="2"/></svg>
<div class="a" style="left:1485px;top:1030px;width:958px;height:247px;background:#fff;border:2.5px solid #111;overflow:hidden;"></div>
<div class="t" style="left:1531.4px;top:1050.9px;font-size:18.66px;color:#b3b3b3;font-weight:normal;font-style:normal;font-family:'Liberation Serif', serif;">Previous Paragraph Previous Paragraph Previous Paragraph Previous Paragraph Previous Paragraph Previous</div>
<div class="t" style="left:1531.4px;top:1071.1px;font-size:18.66px;color:#b3b3b3;font-weight:normal;font-style:normal;font-family:'Liberation Serif', serif;">Paragraph Previous Paragraph Previous Paragraph Previous Paragraph Previous Paragraph</div>
<div class="t" style="left:1564.0px;top:1092.7px;font-size:20px;color:#111;font-weight:normal;font-style:normal;font-family:'Liberation Sans', sans-serif;">1.</div>
<div class="t" style="left:1594.7px;top:1092.7px;font-size:20px;color:#111;font-weight:normal;font-style:normal;font-family:'Liberation Sans', sans-serif;">Text</div>
<div class="t" style="left:1531.4px;top:1116.4px;font-size:18.68px;color:#b3b3b3;font-weight:normal;font-style:normal;font-family:'Liberation Serif', serif;">Following Paragraph Following Paragraph Following Paragraph Following Paragraph Following Paragraph</div>
<div class="t" style="left:1531.4px;top:1136.4px;font-size:18.68px;color:#b3b3b3;font-weight:normal;font-style:normal;font-family:'Liberation Serif', serif;">Following Paragraph Following Paragraph Following Paragraph Following Paragraph Following Paragraph</div>
<div class="t" style="left:1531.4px;top:1156.5px;font-size:18.68px;color:#b3b3b3;font-weight:normal;font-style:normal;font-family:'Liberation Serif', serif;">Following Paragraph Following Paragraph Following Paragraph Following Paragraph Following Paragraph</div>
<div class="t" style="left:1531.4px;top:1176.5px;font-size:18.68px;color:#b3b3b3;font-weight:normal;font-style:normal;font-family:'Liberation Serif', serif;">Following Paragraph Following Paragraph Following Paragraph Following Paragraph Following Paragraph</div>
<div class="t" style="left:1531.4px;top:1196.6px;font-size:18.68px;color:#b3b3b3;font-weight:normal;font-style:normal;font-family:'Liberation Serif', serif;">Following Paragraph Following Paragraph Following Paragraph Following Paragraph Following Paragraph</div>
<div class="t" style="left:1531.4px;top:1216.6px;font-size:18.68px;color:#b3b3b3;font-weight:normal;font-style:normal;font-family:'Liberation Serif', serif;">Following Paragraph Following Paragraph Following Paragraph Following Paragraph Following Paragraph</div>
<div class="t" style="left:1531.4px;top:1236.7px;font-size:18.68px;color:#b3b3b3;font-weight:normal;font-style:normal;font-family:'Liberation Serif', serif;">Following Paragraph Following Paragraph Following Paragraph Following Paragraph Following Paragraph</div>
<div class="t" style="left:1531.4px;top:1256.4px;font-size:18.68px;color:#b3b3b3;font-weight:normal;font-style:normal;font-family:'Liberation Serif', serif;">Following Paragraph Following Paragraph Following Paragraph</div>
<div class="a" style="left:1485px;top:1295px;width:958px;height:158px;background:#e6e6e6;border-radius:9px;box-shadow:inset 0 0 0 1px rgba(0,0,0,.06);overflow:hidden;">
</div>
<div class="a" style="left:1485px;top:1305px;width:958px;height:127px;overflow:hidden;">
<div class="t" style="left:26.0px;top:13.6px;font-size:27.3px;color:#222;word-spacing:0px;">Indent:</div>
<div class="t" style="left:55.0px;top:45.3px;font-size:27.3px;color:#222;word-spacing:-1.2px;">Hanging:  0.25&quot;, Numbered + Level: 1 + Numbering Style: 1, 2, 3, ... +</div>
<div class="t" style="left:26.0px;top:76.9px;font-size:27.3px;color:#222;word-spacing:0px;">Start at: 1 + Alignment: Left + Aligned at:  0.25&quot; + Indent at:  0.5&quot;, Style:</div>
<div class="t" style="left:26.0px;top:108.5px;font-size:27.3px;color:#222;word-spacing:0px;">Show in the Styles gallery</div>
</div>
<div class="a" style="left:1417px;top:1473px;width:28px;height:28px;background:#fff;border-radius:6px;box-shadow:0 0 0 1px rgba(0,0,0,.12),0 1px 1px rgba(0,0,0,.1);"></div>
<div class="t" style="left:1456.5px;top:1472.6px;font-size:27.3px;color:#222;font-weight:normal;font-style:normal;font-family:'Liberation Sans', sans-serif;">Add to template</div>
<div class="a" style="left:1417px;top:1516px;width:28px;height:28px;background:linear-gradient(#2d52c4,#1e40aa);border-radius:6px;"></div>
<svg class="a" style="left:1417px;top:1516px;" width="28" height="28" viewBox="0 0 28 28"><path d="M7 14.5 L12 20 L21 8" stroke="#fff" stroke-width="3" fill="none" stroke-linecap="round" stroke-linejoin="round"/></svg>
<div class="t" style="left:1456.5px;top:1516.9px;font-size:27.3px;color:#222;font-weight:normal;font-style:normal;font-family:'Liberation Sans', sans-serif;">Add to Quick Style list</div>
<div class="a" style="left:1417px;top:1560px;width:28px;height:28px;background:#fff;border-radius:6px;box-shadow:0 0 0 1px rgba(0,0,0,.12),0 1px 1px rgba(0,0,0,.1);"></div>
<div class="t" style="left:1456.5px;top:1560.5px;font-size:27.3px;color:#222;font-weight:normal;font-style:normal;font-family:'Liberation Sans', sans-serif;">Automatically update</div>
<div class="a" style="left:1352px;top:1619px;width:1224px;height:2px;background:#d6d6d6;"></div>
<div class="a" style="left:1368px;top:1652px;width:187px;height:40px;background:#f3f3f3;border-radius:9px;box-shadow:0 0 0 1px rgba(0,0,0,.08),0 1px 2px rgba(0,0,0,.12);"></div>
<div class="a" style="left:1520px;top:1656px;width:32px;height:32px;background:linear-gradient(#2d51c2,#1d3ea9);border-radius:7px;"></div>
<svg class="a" style="left:1526px;top:1664px;" width="20" height="16" viewBox="0 0 20 16"><path d="M4 5 L10 11 L16 5" stroke="#fff" stroke-width="2.8" fill="none" stroke-linecap="round" stroke-linejoin="round"/></svg>
<div class="t" style="left:1385.0px;top:1657.1px;font-size:27px;color:#222;font-weight:normal;font-style:normal;font-family:'Liberation Sans', sans-serif;">Format</div>
<div class="a" style="left:2288px;top:1652px;width:123px;height:39px;background:#fff;border-radius:9px;box-shadow:0 0 0 1px rgba(0,0,0,.08),0 1px 2px rgba(0,0,0,.15);"></div>
<div class="t" style="left:2349.5px;transform:translateX(-50%);top:1657.1px;font-size:27px;color:#222;font-weight:normal;font-style:normal;font-family:'Liberation Sans', sans-serif;">Cancel</div>
<div class="a" style="left:2436px;top:1652px;width:124px;height:39px;background:linear-gradient(#2a4fc0,#1c3ca6);border-radius:9px;box-shadow:0 1px 2px rgba(0,0,0,.15);"></div>
<div class="t" style="left:2498.0px;transform:translateX(-50%);top:1656.9px;font-size:27.3px;color:#fff;font-weight:normal;font-style:normal;font-family:'Liberation Sans', sans-serif;">OK</div>
<div class="a" style="left:1368px;top:1702px;width:232px;height:372px;background:#e7e7e7;border-radius:16px;box-shadow:0 0 0 1px rgba(0,0,0,.16),0 14px 34px rgba(0,0,0,.28);"></div>
<div class="a" style="left:1378px;top:1976px;width:212px;height:44px;background:#5a74c3;border-radius:8px;"></div>
<div class="t" style="left:1397.0px;top:1721.1px;font-size:27px;color:#1c1c1c;font-weight:normal;font-style:normal;font-family:'Liberation Sans', sans-serif;">Font...</div>
<div class="t" style="left:1397.0px;top:1765.1px;font-size:27px;color:#1c1c1c;font-weight:normal;font-style:normal;font-family:'Liberation Sans', sans-serif;">Paragraph...</div>
<div class="t" style="left:1397.0px;top:1809.1px;font-size:27px;color:#1c1c1c;font-weight:normal;font-style:normal;font-family:'Liberation Sans', sans-serif;">Tabs...</div>
<div class="t" style="left:1397.0px;top:1853.1px;font-size:27px;color:#1c1c1c;font-weight:normal;font-style:normal;font-family:'Liberation Sans', sans-serif;">Border...</div>
<div class="t" style="left:1397.0px;top:1897.1px;font-size:27px;color:#1c1c1c;font-weight:normal;font-style:normal;font-family:'Liberation Sans', sans-serif;">Language...</div>
<div class="t" style="left:1397.0px;top:1941.1px;font-size:27px;color:#1c1c1c;font-weight:normal;font-style:normal;font-family:'Liberation Sans', sans-serif;">Frame...</div>
<div class="t" style="left:1397.0px;top:1985.1px;font-size:27px;color:#fff;font-weight:normal;font-style:normal;font-family:'Liberation Sans', sans-serif;">Numbering...</div>
<div class="t" style="left:1397.0px;top:2029.1px;font-size:27px;color:#1c1c1c;font-weight:normal;font-style:normal;font-family:'Liberation Sans', sans-serif;">Shortcut key...</div>
<div class="t" style="left:2853.0px;top:374.3px;font-size:31px;color:#2a2a2a;font-weight:bold;font-style:normal;font-family:'Liberation Sans', sans-serif;">Styles</div>
<div class="a" style="left:3360px;top:375px;width:28px;height:28px;background:#6a6a6a;border-radius:50%;"></div>
<svg class="a" style="left:3360px;top:375px;" width="28" height="28" viewBox="0 0 28 28"><path d="M9 9 L19 19 M19 9 L9 19" stroke="#fff" stroke-width="2.6" stroke-linecap="round"/></svg>
<div class="t" style="left:2857.0px;top:449.0px;font-size:27.2px;color:#2a2a2a;font-weight:normal;font-style:normal;font-family:'Liberation Sans', sans-serif;">Current style:</div>
<div class="a" style="left:2858px;top:500px;width:528px;height:49px;background:#fff;border:2px solid #b4b4b4;"></div>
<div class="t" style="left:2918.0px;top:512.4px;font-size:22.5px;color:#111;font-weight:normal;font-style:normal;font-family:'Liberation Sans', sans-serif;">List Paragraph</div>
<div class="t" style="left:3354.0px;top:511.2px;font-size:24px;color:#4a7fd0;font-weight:normal;font-style:normal;font-family:'Liberation Sans', sans-serif;">¶</div>
<div class="a" style="left:2856px;top:576px;width:234px;height:40px;background:#f3f3f3;border-radius:9px;box-shadow:0 0 0 1px rgba(0,0,0,.08),0 1px 2px rgba(0,0,0,.15);"></div>
<div class="t" style="left:2973.0px;transform:translateX(-50%);top:583.1px;font-size:27px;color:#222;font-weight:normal;font-style:normal;font-family:'Liberation Sans', sans-serif;">New Style...</div>
<div class="a" style="left:3150px;top:576px;width:234px;height:40px;background:#fff;border-radius:9px;box-shadow:0 0 0 1px rgba(0,0,0,.08),0 1px 2px rgba(0,0,0,.15);"></div>
<div class="t" style="left:3267.0px;transform:translateX(-50%);top:583.1px;font-size:27px;color:#222;font-weight:normal;font-style:normal;font-family:'Liberation Sans', sans-serif;">Select All</div>
<div class="t" style="left:2857.0px;top:651.5px;font-size:27.1px;color:#2a2a2a;font-weight:normal;font-style:normal;font-family:'Liberation Sans', sans-serif;">Apply a style:</div>
<div class="a" style="left:2857px;top:696px;width:526px;height:1262px;background:#fff;border:1px solid #e0e0e0;"></div>
<div class="a" style="left:2862px;top:702px;width:515px;height:58px;background:#fff;border:2px solid #a8a8a8;"></div>
<div class="t" style="left:2886.0px;top:720.5px;font-size:23px;color:#111;font-weight:normal;font-style:normal;font-family:'Liberation Sans', sans-serif;">Clear Formatting</div>
<div class="a" style="left:2866px;top:765px;width:508px;height:48px;background:#fff;border:2px solid #a8a8a8;"></div>
<div class="t" style="left:2890.0px;top:777.7px;font-size:24px;color:#111;font-weight:normal;font-style:normal;font-family:'Liberation Sans', sans-serif;">Normal</div>
<div class="a" style="left:2866px;top:823px;width:508px;height:48px;background:#fff;border:2px solid #a8a8a8;"></div>
<div class="t" style="left:2890.0px;top:835.7px;font-size:24px;color:#111;font-weight:normal;font-style:normal;font-family:'Liberation Sans', sans-serif;">No Spacing</div>
<div class="a" style="left:2866px;top:880px;width:508px;height:48px;background:#fff;border:2px solid #a8a8a8;"></div>
<div class="t" style="left:2890.0px;top:889.8px;font-size:31px;color:#1f4e79;font-weight:normal;font-style:normal;font-family:'Liberation Sans', sans-serif;">Heading 1</div>
<div class="a" style="left:2866px;top:938px;width:508px;height:48px;background:#fff;border:2px solid #a8a8a8;"></div>
<div class="t" style="left:2890.0px;top:948.1px;font-size:30px;color:#1f4e79;font-weight:normal;font-style:normal;font-family:'Liberation Sans', sans-serif;">Heading 2</div>
<div class="a" style="left:2866px;top:997px;width:508px;height:48px;background:#fff;border:2px solid #a8a8a8;"></div>
<div class="t" style="left:2890.0px;top:1006.9px;font-size:32px;color:#111;font-weight:normal;font-style:normal;font-family:'Liberation Sans', sans-serif;">Title</div>
<div class="a" style="left:2866px;top:1056px;width:508px;height:48px;background:#fff;border:2px solid #a8a8a8;"></div>
<div class="t" style="left:2890.0px;top:1065.8px;font-size:27px;color:#555;font-weight:normal;font-style:normal;font-family:'Liberation Sans', sans-serif;">Subtitle</div>
<div class="a" style="left:2866px;top:1113px;width:508px;height:48px;background:#fff;border:2px solid #a8a8a8;"></div>
<div class="t" style="left:2890.0px;top:1126.5px;font-size:23px;color:#404040;font-weight:normal;font-style:italic;font-family:'Liberation Sans', sans-serif;">Subtle Emphasis</div>
<div class="a" style="left:2866px;top:1171px;width:508px;height:48px;background:#fff;border:2px solid #a8a8a8;"></div>
<div class="t" style="left:2890.0px;top:1184.5px;font-size:23px;color:#111;font-weight:normal;font-style:italic;font-family:'Liberation Sans', sans-serif;">Emphasis</div>
<div class="a" style="left:2866px;top:1229px;width:508px;height:48px;background:#fff;border:2px solid #a8a8a8;"></div>
<div class="t" style="left:2890.0px;top:1242.5px;font-size:23px;color:#1f4e79;font-weight:normal;font-style:italic;font-family:'Liberation Sans', sans-serif;">Intense Emphasis</div>
<div class="a" style="left:2866px;top:1287px;width:508px;height:48px;background:#fff;border:2px solid #a8a8a8;"></div>
<div class="t" style="left:2890.0px;top:1300.5px;font-size:23px;color:#111;font-weight:bold;font-style:normal;font-family:'Liberation Sans', sans-serif;">Strong</div>
<div class="a" style="left:2866px;top:1345px;width:508px;height:48px;background:#fff;border:2px solid #a8a8a8;"></div>
<div class="t" style="left:3110.0px;transform:translateX(-50%);top:1358.5px;font-size:23px;color:#404040;font-weight:normal;font-style:italic;font-family:'Liberation Sans', sans-serif;">Quote</div>
<div class="a" style="left:2866px;top:1403px;width:508px;height:48px;background:#fff;border:2px solid #a8a8a8;"></div>
<div class="a" style="left:2916px;top:1410px;width:428px;height:2px;background:#1f3f5f;"></div>
<div class="a" style="left:2916px;top:1441.5px;width:428px;height:2.0px;background:#1f3f5f;"></div>
<div class="t" style="left:3130.0px;transform:translateX(-50%);top:1416.5px;font-size:23px;color:#1f4e79;font-weight:normal;font-style:italic;font-family:'Liberation Sans', sans-serif;">Intense Quote</div>
<div class="a" style="left:2866px;top:1461px;width:508px;height:48px;background:#fff;border:2px solid #a8a8a8;"></div>
<div class="t" style="left:2890.0px;top:1474.5px;font-size:23px;color:#5a5a5a;font-weight:normal;font-style:normal;font-family:'Liberation Sans', sans-serif;">S<span style="font-size:17.9px">UBTLE</span> R<span style="font-size:17.9px">EFERENCE</span></div>
<div class="a" style="left:2866px;top:1519px;width:508px;height:48px;background:#fff;border:2px solid #a8a8a8;"></div>
<div class="t" style="left:2890.0px;top:1532.5px;font-size:23px;color:#1f4e79;font-weight:bold;font-style:normal;font-family:'Liberation Sans', sans-serif;">I<span style="font-size:17.9px">NTENSE</span> R<span style="font-size:17.9px">EFERENCE</span></div>
<div class="a" style="left:2866px;top:1577px;width:508px;height:48px;background:#fff;border:2px solid #a8a8a8;"></div>
<div class="t" style="left:2890.0px;top:1590.5px;font-size:23px;color:#111;font-weight:bold;font-style:italic;font-family:'Liberation Sans', sans-serif;">Book Title</div>
<div class="a" style="left:2865px;top:1635px;width:509px;height:48px;background:#fff;border:2px solid #8aabd9;"></div>
<div class="t" style="left:2926.0px;top:1647.7px;font-size:24px;color:#111;font-weight:normal;font-style:normal;font-family:'Liberation Sans', sans-serif;">List Paragraph</div>
<div class="t" style="left:2857.0px;top:1992.1px;font-size:27px;color:#222;font-weight:normal;font-style:normal;font-family:'Liberation Sans', sans-serif;">List:</div>
<div class="a" style="left:2925px;top:1984px;width:457px;height:45px;background:linear-gradient(#f4f4f4,#e4e4e4);border:1.5px solid #c8c8c8;border-radius:7px;"></div>
<div class="t" style="left:2933.0px;top:1995.7px;font-size:21px;color:#222;font-weight:normal;font-style:normal;font-family:'Liberation Sans', sans-serif;">Recommended</div>
<svg class="a" style="left:3363px;top:1993px;" width="18" height="28" viewBox="0 0 18 28"><path d="M9 2 L15 9 H3 Z M9 26 L15 19 H3 Z" fill="#555"/></svg>
<div class="a" style="left:2857px;top:2054px;width:27px;height:27px;background:#fff;border-radius:6px;box-shadow:0 0 0 1px rgba(0,0,0,.12),0 1px 1px rgba(0,0,0,.08);"></div>
<div class="t" style="left:2897.0px;top:2053.7px;font-size:27.5px;color:#222;font-weight:normal;font-style:normal;font-family:'Liberation Sans', sans-serif;">Show styles guides</div>
<div class="a" style="left:2857px;top:2099px;width:27px;height:27px;background:#fff;border-radius:6px;box-shadow:0 0 0 1px rgba(0,0,0,.12),0 1px 1px rgba(0,0,0,.08);"></div>
<div class="t" style="left:2897.0px;top:2097.7px;font-size:27.5px;color:#222;font-weight:normal;font-style:normal;font-family:'Liberation Sans', sans-serif;">Show direct formatting guides</div>
<div class="t" style="left:48.0px;top:2180.3px;font-size:24px;color:#555;font-weight:normal;font-style:normal;font-family:'Liberation Sans', sans-serif;">Page 1 of 1</div>
<div class="t" style="left:210.7px;top:2180.3px;font-size:24px;color:#555;font-weight:normal;font-style:normal;font-family:'Liberation Sans', sans-serif;">2 words</div>
<svg class="a" style="left:336px;top:2176px;" width="34" height="32" viewBox="0 0 34 32"><path d="M3 3 H15.5 V25 H3 Z" stroke="#555" stroke-width="2.2" fill="none" stroke-linejoin="round"/><path d="M15.5 3 V28 M15.5 3 H27 M15.5 23 H27" stroke="#555" stroke-width="2.2" fill="none"/><path d="M18.5 15 L22 19.5 L30.5 10" stroke="#555" stroke-width="2.2" fill="none" stroke-linecap="round"/></svg>
<div class="t" style="left:407.0px;top:2179.3px;font-size:25.2px;color:#555;font-weight:normal;font-style:normal;font-family:'Liberation Sans', sans-serif;">English (United States)</div>
<svg class="a" style="left:704px;top:2174px;" width="36" height="34" viewBox="0 0 36 34"><circle cx="14.5" cy="8" r="4.2" stroke="#555" stroke-width="2" fill="none"/><path d="M2.5 10 Q4 14 9 14 Q14.5 16 20 14 Q25 13 26.5 9 M12 15 Q14 22 10 26 Q8 30 12 31" stroke="#555" stroke-width="2" fill="none" stroke-linecap="round"/><path d="M17.5 24 L22 30 L33 19" stroke="#555" stroke-width="2.2" fill="none" stroke-linecap="round"/></svg>
<div class="t" style="left:743.0px;top:2179.0px;font-size:25.5px;color:#555;font-weight:normal;font-style:normal;font-family:'Liberation Sans', sans-serif;">Accessibility: Good to go</div>
<svg class="a" style="left:2577px;top:2180px;" width="32" height="24" viewBox="0 0 32 24"><path d="M2 7 V2 H8 M24 2 H30 V7 M30 17 V22 H24 M8 22 H2 V17" stroke="#555" stroke-width="2.4" fill="none"/><rect x="1.5" y="1.5" width="29" height="21" rx="3" stroke="#555" stroke-width="2" fill="none"/></svg>
<div class="t" style="left:2621.0px;top:2179.5px;font-size:25px;color:#555;font-weight:normal;font-style:normal;font-family:'Liberation Sans', sans-serif;">Focus</div>
<div class="a" style="left:2710px;top:2170px;width:74px;height:44px;background:linear-gradient(#a6a6a6,#acacac);"></div>
<svg class="a" style="left:2731px;top:2176px;" width="32" height="30" viewBox="0 0 32 30"><rect x="2" y="2" width="28" height="26" rx="2" fill="#7a7a7a" stroke="#fff" stroke-width="3"/><path d="M7 7 H25 M7 11 H25 M7 15 H25 M7 19 H25 M7 23 H25" stroke="#fff" stroke-width="2.2"/></svg>
<svg class="a" style="left:2802px;top:2177px;" width="36" height="34" viewBox="0 0 36 34"><path d="M2 2 H24 V13 M2 2 V22 H13" stroke="#555" stroke-width="2.4" fill="none"/><path d="M6 7 H20 M6 11 H18 M6 15 H14 M6 19 H12" stroke="#555" stroke-width="2"/><circle cx="24" cy="23" r="9" fill="#555"/><path d="M20 17 Q24 20 22 24 Q26 26 25 31" stroke="#ddd" stroke-width="1.6" fill="none"/></svg>
<svg class="a" style="left:2874px;top:2178px;" width="34" height="30" viewBox="0 0 34 30"><path d="M2 3 H6 M10 3 H32 M8 11 H12 M16 11 H32 M8 19 H12 M16 19 H32 M4 27 H8 M12 27 H32" stroke="#555" stroke-width="2.4"/></svg>
<svg class="a" style="left:2946px;top:2178px;" width="32" height="30" viewBox="0 0 32 30"><path d="M2 3 H30 M2 11 H30 M2 19 H30 M2 27 H22" stroke="#555" stroke-width="2.4"/></svg>
<div class="a" style="left:3014px;top:2189px;width:16px;height:4px;background:#555;"></div>
<div class="a" style="left:3044px;top:2186px;width:200px;height:10px;background:#9a9a9a;border-radius:5px;"></div>
<div class="a" style="left:3127px;top:2175px;width:33px;height:33px;background:#fff;border-radius:50%;box-shadow:0 1px 3px rgba(0,0,0,.35);"></div>
<div class="a" style="left:3257px;top:2190px;width:17px;height:3px;background:#555;"></div>
<div class="a" style="left:3264px;top:2183px;width:3px;height:17px;background:#555;"></div>
<div class="t" style="left:3308.6px;top:2179.4px;font-size:25.5px;color:#555;font-weight:normal;font-style:normal;font-family:'Liberation Sans', sans-serif;">100%</div>
</body></html>
